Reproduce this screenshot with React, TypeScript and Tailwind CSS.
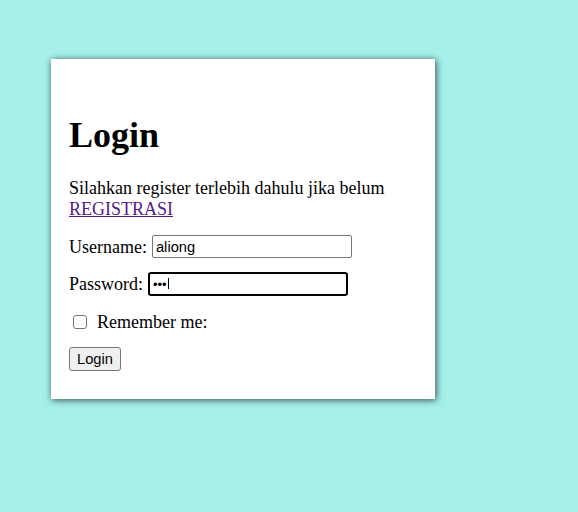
import React, { useState } from "react";

const serif = { fontFamily: '"Liberation Serif", "Times New Roman", serif' };
const sans = { fontFamily: '"Liberation Sans", Arial, sans-serif' };

const App = () => {
  const [username, setUsername] = useState("aliong");
  const [password, setPassword] = useState("abc");
  const [remember, setRemember] = useState(false);

  return (
    <div
      className="min-h-screen bg-[#a6f0ec] pl-[51px] pt-[59px] text-black"
      style={serif}
    >
      <div className="h-[340px] w-[384px] bg-white px-[18px] shadow-[1px_1px_7px_rgba(0,0,0,0.7)]">
        <h1 className="pt-[56px] text-[36px] font-bold leading-[40px]">
          Login
        </h1>
        <p className="mt-[22.5px] text-[18px] leading-[21px]">
          Silahkan register terlebih dahulu jika belum
          <br />
          <a href="#" className="text-[#551a8b] underline">
            REGISTRASI
          </a>
        </p>

        <form
          className="text-[18px] leading-[20px]"
          onSubmit={(e) => e.preventDefault()}
        >
          <div className="mt-[15.5px] flex h-[23px] items-center">
            <label htmlFor="username">Username:</label>
            <input
              id="username"
              className="ml-[5px] h-[23px] w-[200px] rounded-[2px] border border-[#767676] px-[3px] text-[14.67px] leading-none outline-none"
              style={sans}
              value={username}
              onChange={(e) => setUsername(e.target.value)}
            />
          </div>

          <div className="mt-[14px] flex h-[24px] items-center">
            <label htmlFor="password">Password:</label>
            <div className="relative ml-[5px] flex h-[24px] w-[200px] items-center rounded-[3px] border-2 border-black pl-[3px]">
              <input
                id="password"
                type="password"
                className="h-full w-full border-none text-[13px] leading-none outline-none"
                style={sans}
                value={password}
                onChange={(e) => setPassword(e.target.value)}
              />
              <span className="absolute left-[18px] top-[4px] h-[11px] w-[1px] bg-black" />
            </div>
          </div>

          <div className="mt-[16px] flex h-[20px] items-center">
            <input
              id="remember"
              type="checkbox"
              className="ml-[4px] mr-[10px] h-[14px] w-[14px] appearance-none rounded-[3px] border border-[#767676] bg-white"
              checked={remember}
              onChange={(e) => setRemember(e.target.checked)}
            />
            <label htmlFor="remember">Remember me:</label>
          </div>

          <button
            type="submit"
            className="mt-[15px] h-[24px] rounded-[3px] border border-[#767676] bg-[#efefef] px-[7px] text-[14.67px] leading-none"
            style={sans}
          >
            Login
          </button>
        </form>
      </div>
    </div>
  );
};

export default App;
